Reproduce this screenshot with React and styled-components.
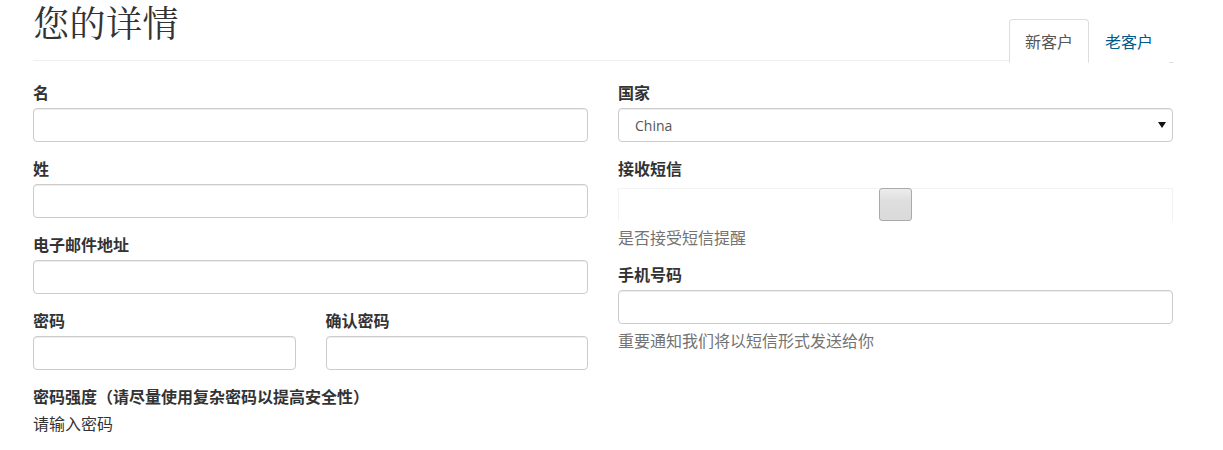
import React from "react";
import styled, { createGlobalStyle } from "styled-components";

const Global = createGlobalStyle`
  html, body { margin: 0; padding: 0; background: #fff; }
  body {
    font-family: "Open Sans", "Noto Sans CJK SC", sans-serif;
    font-size: 14px;
    line-height: 22px;
    color: #333;
  }
  * { box-sizing: border-box; }
`;

const Container = styled.div`
  width: 1140px;
  margin: 0 33px;
`;

const Header = styled.div`
  display: flex;
  justify-content: space-between;
  align-items: flex-start;
  height: 61px;
  border-bottom: 1px solid #eee;
`;

const Title = styled.h1`
  margin: 0;
  padding-top: 1px;
  font-family: "Noto Serif CJK SC", "Noto Sans CJK SC", serif;
  font-weight: 400;
  font-size: 36px;
  line-height: 42px;
  color: #333;
  letter-spacing: 0.5px;
`;

const Tabs = styled.ul`
  list-style: none;
  display: flex;
  align-self: flex-end;
  margin: 0 0 -3px 0;
  padding: 0;
  width: 164px;
  background: #fff;
  border-bottom: 1px solid #ddd;
  position: relative;
  z-index: 1;
`;

const Tab = styled.li`
  margin-bottom: -1px;
  padding: 10px 15px;
  font-size: 16px;
  line-height: 22px;
  font-family: "Noto Sans CJK SC", sans-serif;
  border: 1px solid ${(p) => (p.$active ? "#ddd" : "transparent")};
  border-bottom-color: ${(p) => (p.$active ? "#fff" : "transparent")};
  border-radius: 4px 4px 0 0;
  background: #fff;
  color: ${(p) => (p.$active ? "#555" : "#005a8c")};
`;

const Columns = styled.div`
  display: grid;
  grid-template-columns: 555px 555px;
  column-gap: 30px;
  padding-top: 20px;
`;

const Column = styled.div`
  display: flex;
  flex-direction: column;
`;

const Group = styled.div`
  margin-bottom: 15px;
`;

const Label = styled.label`
  display: block;
  font-family: "Noto Sans CJK SC", sans-serif;
  font-weight: 700;
  font-size: 16px;
  line-height: 22px;
  margin-bottom: 5px;
  color: #333;
`;

const Input = styled.input`
  display: block;
  width: 100%;
  height: 34px;
  padding: 6px 12px;
  border: 1px solid #ccc;
  border-radius: 4px;
  box-shadow: inset 0 1px 1px rgba(0, 0, 0, 0.075);
  font-size: 14px;
  background: #fff;
  outline: none;
`;

const SelectWrap = styled.div`
  position: relative;
`;

const Select = styled.select`
  display: block;
  width: 100%;
  height: 34px;
  padding: 6px 16px;
  border: 1px solid #ccc;
  border-radius: 4px;
  box-shadow: inset 0 1px 1px rgba(0, 0, 0, 0.075);
  font-family: "Open Sans", sans-serif;
  font-size: 14px;
  color: #555;
  background: #fff;
  appearance: none;
  -webkit-appearance: none;
  outline: none;
`;

const Arrow = styled.svg`
  position: absolute;
  right: 7px;
  top: 14px;
  pointer-events: none;
`;

const Pair = styled.div`
  display: grid;
  grid-template-columns: 1fr 1fr;
  column-gap: 30px;
`;

const Track = styled.div`
  position: relative;
  margin-top: 9px;
  height: 33px;
  border: 1px solid #f2f2f2;
  border-bottom: none;
`;

const Handle = styled.div`
  position: absolute;
  top: -1px;
  width: 33px;
  height: 33px;
  margin-left: -17px;
  border: 1px solid #aaa;
  border-radius: 3px;
  background: linear-gradient(#ececec 0%, #dedede 40%, #dadada 100%);
`;

const Help = styled.p`
  margin: 5px 0 0;
  font-family: "Noto Sans CJK SC", sans-serif;
  font-size: 16px;
  line-height: 22px;
  color: ${(p) => (p.$muted ? "#737373" : "#333")};
`;

export default function App() {
  return (
    <>
      <Global />
      <Container>
        <Header>
          <Title>您的详情</Title>
          <Tabs>
            <Tab $active>新客户</Tab>
            <Tab>老客户</Tab>
          </Tabs>
        </Header>
        <Columns>
          <Column>
            <Group>
              <Label>名</Label>
              <Input type="text" />
            </Group>
            <Group>
              <Label>姓</Label>
              <Input type="text" />
            </Group>
            <Group>
              <Label>电子邮件地址</Label>
              <Input type="email" />
            </Group>
            <Pair>
              <Group>
                <Label>密码</Label>
                <Input type="password" />
              </Group>
              <Group>
                <Label>确认密码</Label>
                <Input type="password" />
              </Group>
            </Pair>
            <Group>
              <Label>密码强度（请尽量使用复杂密码以提高安全性）</Label>
              <Help>请输入密码</Help>
            </Group>
          </Column>
          <Column>
            <Group>
              <Label>国家</Label>
              <SelectWrap>
                <Select defaultValue="China">
                  <option>China</option>
                </Select>
                <Arrow width="8" height="6" viewBox="0 0 8 6">
                  <path d="M0 0 H8 L4 6 Z" fill="#111" />
                </Arrow>
              </SelectWrap>
            </Group>
            <Group>
              <Label>接收短信</Label>
              <Track>
                <Handle style={{ left: "50%" }} />
              </Track>
              <Help $muted>是否接受短信提醒</Help>
            </Group>
            <Group>
              <Label>手机号码</Label>
              <Input type="tel" />
              <Help $muted>重要通知我们将以短信形式发送给你</Help>
            </Group>
          </Column>
        </Columns>
      </Container>
    </>
  );
}
